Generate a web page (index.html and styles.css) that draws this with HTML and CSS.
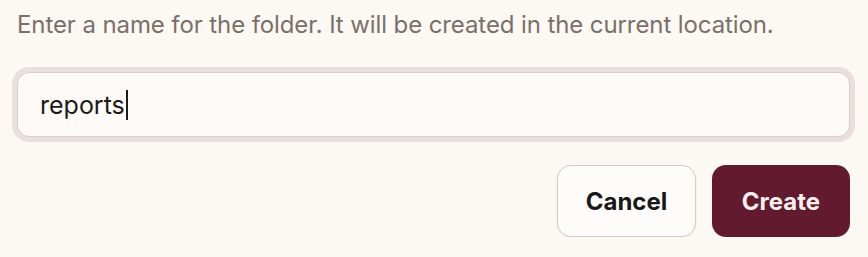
FILE: index.html
```html
<!DOCTYPE html>
<html>
<head>
  <title>New folder</title>
  <meta charset="utf-8" />
  <link rel="stylesheet" href="styles.css">
</head>
<body>
  <div class="dialog">
    <p class="hint">Enter a name for the folder. It will be created in the current location.</p>

    <div class="field">
      <span class="value">reports</span><span class="caret"></span>
    </div>

    <div class="actions">
      <button class="btn btn-cancel">Cancel</button>
      <button class="btn btn-create">Create</button>
    </div>
  </div>
</body>
</html>
```

FILE: styles.css
```css
body {
  margin: 0;
  background-color: #fcf9f5;
  font-family: Inter, 'Noto Sans', sans-serif;
}
.dialog {
  padding: 0 18px 0 17px;
}
.hint {
  margin: 0;
  padding-top: 8px;
  font-size: 24px;
  line-height: 34px;
  color: #7a7068;
  letter-spacing: -0.1px;
}
.field {
  margin-top: 30px;
  height: 65px;
  box-sizing: border-box;
  border: 1px solid #dccdcd;
  border-radius: 12px;
  box-shadow: 0 0 0 5px #eadfdf;
  background-color: #fdfaf7;
  padding-left: 22px;
  display: flex;
  align-items: center;
  font-size: 25px;
  color: #1d1a18;
}
.caret {
  display: inline-block;
  width: 2px;
  height: 30px;
  margin-left: 1px;
  background-color: #1d1a18;
}
.actions {
  display: flex;
  justify-content: flex-end;
  gap: 16px;
  margin-top: 28px;
}
.btn {
  height: 72px;
  width: 139px;
  border-radius: 14px;
  font-family: Inter, 'Noto Sans', sans-serif;
  font-size: 24px;
  font-weight: 700;
  cursor: pointer;
}
.btn-cancel {
  background-color: #fefcfa;
  border: 1px solid #d9ccba;
  color: #1a1816;
  box-shadow: 0 1px 3px rgba(90, 70, 50, 0.08);
}
.btn-create {
  width: 138px;
  background-color: #621a2e;
  border: none;
  color: #f7eeee;
}
```
